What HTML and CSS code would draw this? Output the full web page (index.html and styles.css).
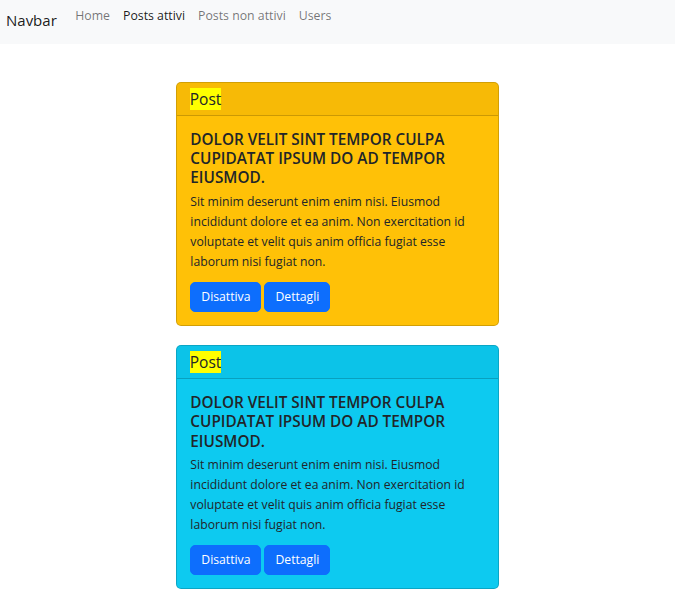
FILE: index.html
```html
<!DOCTYPE html>
<html lang="it">
<head>
<meta charset="utf-8">
<title>Posts</title>
<link rel="stylesheet" href="styles.css">
</head>
<body>
<nav class="navbar">
  <a class="brand" href="#">Navbar</a>
  <ul class="nav">
    <li><a class="nav-link" href="#">Home</a></li>
    <li><a class="nav-link active" href="#">Posts attivi</a></li>
    <li><a class="nav-link" href="#">Posts non attivi</a></li>
    <li><a class="nav-link" href="#">Users</a></li>
  </ul>
</nav>
<main class="main">
  <div class="card card-warning">
    <div class="card-header"><span class="mark">Post</span></div>
    <div class="card-body">
      <h5 class="card-title">DOLOR VELIT SINT TEMPOR CULPA CUPIDATAT IPSUM DO AD TEMPOR EIUSMOD.</h5>
      <p class="card-text">Sit minim deserunt enim enim nisi. Eiusmod incididunt dolore et ea anim. Non exercitation id voluptate et velit quis anim officia fugiat esse laborum nisi fugiat non.</p>
      <div class="actions">
        <button class="btn">Disattiva</button>
        <button class="btn">Dettagli</button>
      </div>
    </div>
  </div>
  <div class="card card-info">
    <div class="card-header"><span class="mark">Post</span></div>
    <div class="card-body">
      <h5 class="card-title">DOLOR VELIT SINT TEMPOR CULPA CUPIDATAT IPSUM DO AD TEMPOR EIUSMOD.</h5>
      <p class="card-text">Sit minim deserunt enim enim nisi. Eiusmod incididunt dolore et ea anim. Non exercitation id voluptate et velit quis anim officia fugiat esse laborum nisi fugiat non.</p>
      <div class="actions">
        <button class="btn">Disattiva</button>
        <button class="btn">Dettagli</button>
      </div>
    </div>
  </div>
</main>
</body>
</html>
```
FILE: styles.css
```css
* { box-sizing: border-box; }
html, body { margin: 0; padding: 0; }
body {
  font-family: "Open Sans", "Noto Sans", sans-serif;
  font-size: 12.2px;
  line-height: 20px;
  color: #212529;
  background: #fff;
}
.navbar {
  display: flex;
  align-items: flex-start;
  height: 44px;
  padding: 0 6px;
  background: #f8f9fa;
}
.brand {
  font-size: 15px;
  line-height: 24px;
  padding-top: 8px;
  margin-right: 12px;
  color: rgba(0,0,0,.9);
  text-decoration: none;
}
.nav {
  display: flex;
  list-style: none;
  margin: 0;
  padding: 0;
}
.nav-link {
  display: block;
  padding: 6px 6.5px 0;
  font-size: 12.3px;
  line-height: 20px;
  color: rgba(0,0,0,.55);
  text-decoration: none;
}
.nav-link.active { color: rgba(0,0,0,.9); }
.main {
  display: flex;
  flex-direction: column;
  align-items: center;
  gap: 19px;
  padding-top: 38px;
}
.card {
  width: 323px;
  border: 1px solid rgba(0,0,0,.175);
  border-radius: 5px;
  overflow: hidden;
}
.card-warning { background: #ffc107; }
.card-info { background: #0dcaf0; }
.card-header {
  padding: 5px 13.33px 5px 12.8px;
  line-height: 22px;
  font-size: 15.5px;
  background: rgba(0,0,0,.03);
  border-bottom: 1px solid rgba(0,0,0,.175);
}
.mark { background: #ffff00; color: #212529; }
.card-body { padding: 14px 13.33px 13px; }
.card-title {
  margin: 0 0 4.6px;
  font-size: 15.3px;
  line-height: 19.2px;
  font-weight: 600;
}
.card-text { margin: 0 0 10px; }
.actions { display: flex; gap: 3px; }
.btn {
  font-family: inherit;
  font-size: 12.2px;
  line-height: 20px;
  padding: 4px 10px;
  border: 1px solid #0d6efd;
  border-radius: 5px;
  background: #0d6efd;
  color: #fff;
}
```
